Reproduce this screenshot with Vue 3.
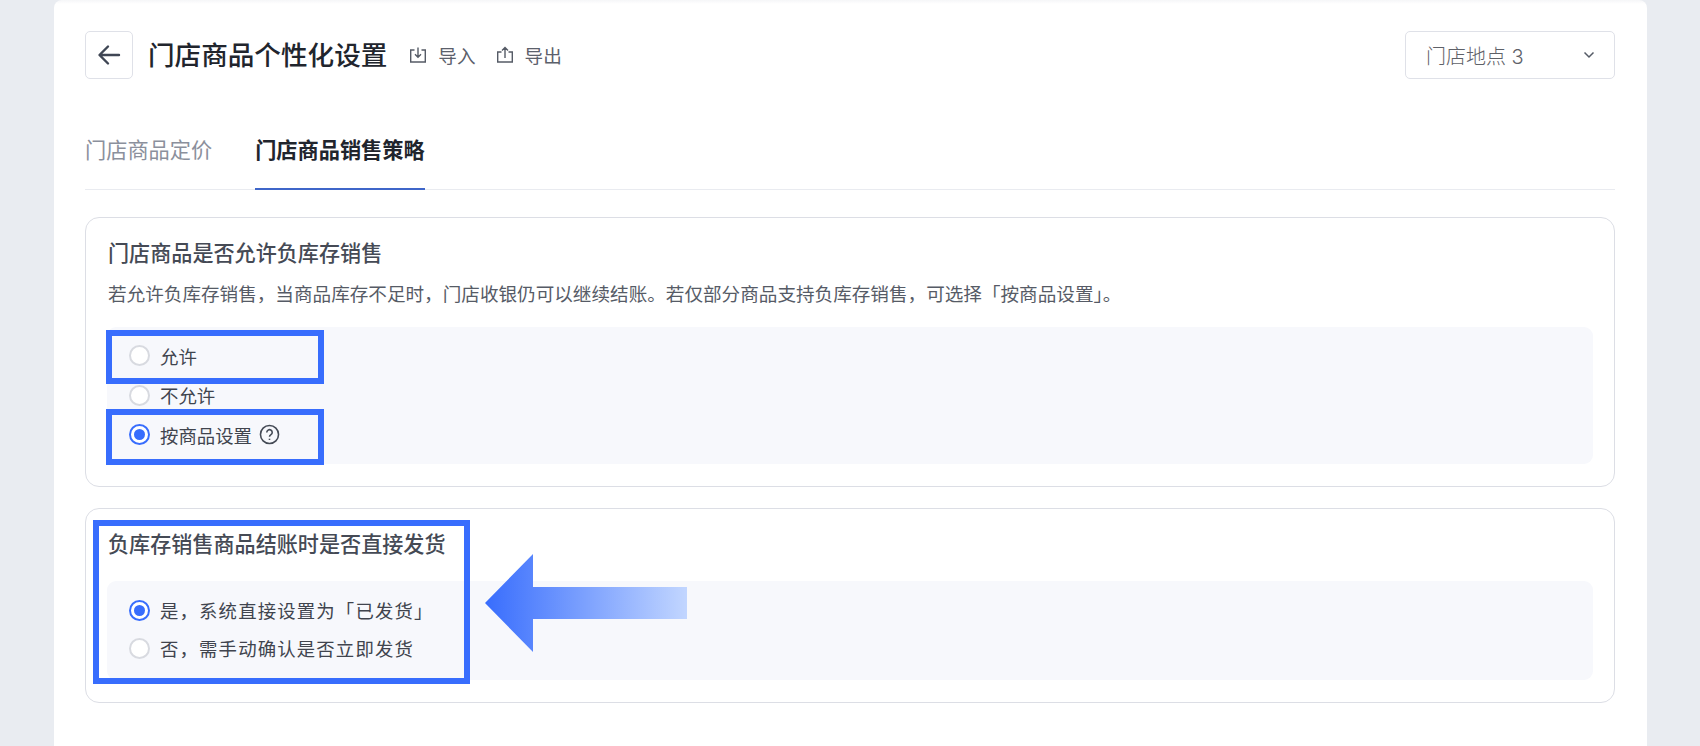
<script setup>
const firstOptions = [
  { label: '允许', checked: false },
  { label: '不允许', checked: false },
  { label: '按商品设置', checked: true, help: true },
]
const secondOptions = [
  { label: '是，系统直接设置为「已发货」', checked: true },
  { label: '否，需手动确认是否立即发货', checked: false },
]
</script>

<template>
  <div class="page">
    <main class="panel">
      <header class="head">
        <button class="back" aria-label="返回">
          <svg width="26" height="26" viewBox="0 0 26 26" fill="none" stroke="#3f4654" stroke-width="2.4" stroke-linecap="round" stroke-linejoin="round">
            <path d="M23 13H4M12 4.5 3.5 13l8.500 8.500" />
          </svg>
        </button>
        <h1 class="title">门店商品个性化设置</h1>
        <a class="action">
          <svg width="18" height="18" viewBox="0 0 18 18" fill="none" stroke="#555b66" stroke-width="1.400">
            <path d="M5.500 4H1.700v12h14.600V4h-3.800M9 1.500V11M6 8.200 9 11.200l3-3" />
          </svg>
          <span class="action-text">导入</span>
        </a>
        <a class="action">
          <svg width="18" height="18" viewBox="0 0 18 18" fill="none" stroke="#555b66" stroke-width="1.400">
            <path d="M5.500 6H1.700v10h14.600V6h-3.800M9 12V1.800M6 4.600l3-3 3 3" />
          </svg>
          <span class="action-text">导出</span>
        </a>
        <div class="select">
          <span>门店地点 3</span>
          <svg width="12" height="8" viewBox="0 0 12 8" fill="none" stroke="#555b66" stroke-width="1.500">
            <path d="M1.500 1.500 6 6l4.500-4.500" />
          </svg>
        </div>
      </header>

      <nav class="tabs">
        <span class="tab">门店商品定价</span>
        <span class="tab active">门店商品销售策略</span>
      </nav>

      <section class="card first">
        <h2 class="card-title">门店商品是否允许负库存销售</h2>
        <p class="desc">若允许负库存销售，当商品库存不足时，门店收银仍可以继续结账。若仅部分商品支持负库存销售，可选择「按商品设置」。</p>
        <div class="options opts-first">
          <label v-for="o in firstOptions" :key="o.label" class="option">
            <span class="radio" :class="{ on: o.checked }"></span>
            <span>{{ o.label }}</span>
            <svg v-if="o.help" class="help" width="21" height="21" viewBox="0 0 20 20" fill="none" stroke="#444a55" stroke-width="1.500">
              <circle cx="10" cy="10" r="8.600" />
              <path d="M7.400 8a2.600 2.600 0 1 1 4 2.200c-.9.600-1.400 1-1.400 2" />
              <path d="M10 14v1.200" />
            </svg>
          </label>
        </div>
        <span class="mark mark-a"></span>
        <span class="mark mark-b"></span>
      </section>

      <section class="card second">
        <h2 class="card-title">负库存销售商品结账时是否直接发货</h2>
        <div class="options opts-second">
          <label v-for="o in secondOptions" :key="o.label" class="option">
            <span class="radio" :class="{ on: o.checked }"></span>
            <span>{{ o.label }}</span>
          </label>
        </div>
        <span class="mark mark-c"></span>
        <svg class="arrow" width="204" height="98" viewBox="0 0 204 98">
          <defs>
            <linearGradient id="fade" x1="0" y1="0" x2="1" y2="0">
              <stop offset="0" stop-color="#386dfd" />
              <stop offset="1" stop-color="#c2d6ff" />
            </linearGradient>
          </defs>
          <path d="M0 49 48 0V33H202V65H48V98Z" fill="url(#fade)" />
        </svg>
      </section>
    </main>
  </div>
</template>

<style>
html, body { margin: 0; background: #e9ecf1; overflow: hidden; }
</style>

<style scoped>
.page {
  width: 1700px;
  height: 746px;
  overflow: hidden;
  padding: 0 53px 0 54px;
  box-sizing: border-box;
  background: #e9ecf1;
  font-family: Inter, "Noto Sans CJK SC", sans-serif;
  color: #333842;
}
.panel {
  height: 100%;
  box-sizing: border-box;
  background: linear-gradient(#f5f6f8, #fff 4px);
  border-radius: 8px 8px 0 0;
  padding: 31px 32px 0 31px;
}
.head {
  display: flex;
  align-items: center;
  height: 48px;
}
.back {
  width: 48px;
  height: 48px;
  padding: 0;
  display: flex;
  align-items: center;
  justify-content: center;
  border: 1px solid #dfe1e8;
  border-radius: 5px;
  background: #fff;
  box-sizing: border-box;
}
.title {
  margin: 0 22px 0 15px;
  font-size: 26.6px;
  font-weight: 500;
  color: #21252d;
  line-height: 1;
}
.action {
  display: flex;
  align-items: center;
  gap: 11px;
  margin-right: 20px;
  font-size: 18.6px;
  color: #5b606b;
}
.action-text { position: relative; top: -1px; }
.select {
  margin-left: auto;
  width: 210px;
  height: 48px;
  box-sizing: border-box;
  border: 1px solid #dfe1e8;
  border-radius: 5px;
  padding: 0 19px 0 20px;
  display: flex;
  align-items: center;
  justify-content: space-between;
  font-size: 20px;
  font-weight: 300;
  color: #5e6168;
}
.tabs {
  display: flex;
  gap: 43px;
  margin-top: 36px;
  height: 75px;
  box-sizing: border-box;
  border-bottom: 1px solid #e9ebf0;
}
.tab {
  height: 75px;
  box-sizing: border-box;
  line-height: 70px;
  font-size: 21.2px;
  color: #8b909c;
}
.tab.active {
  font-weight: 700;
  color: #21252d;
  border-bottom: 2px solid #3f66c9;
}
.card {
  position: relative;
  border: 1px solid #dcdee5;
  border-radius: 14px;
  padding: 22px 21px 0;
  box-sizing: border-box;
}
.card.first { height: 270px; margin-top: 27px; }
.card.second { height: 195px; margin-top: 21px; }
.card-title {
  margin: 0 0 0 1px;
  font-size: 21.1px;
  line-height: 28px;
  font-weight: 500;
  color: #454a55;
}
.desc {
  margin: 13px 0 0 1px;
  font-size: 18.6px;
  line-height: 26px;
  color: #565b66;
}
.options {
  background: #f7f8fc;
  border-radius: 9px;
  display: flex;
  flex-direction: column;
  padding-left: 22px;
}
.opts-first { height: 137px; margin-top: 20px; padding-top: 9px; box-sizing: border-box; }
.opts-second { height: 99px; margin-top: 22px; padding-top: 10px; box-sizing: border-box; }
.option {
  display: flex;
  align-items: center;
  height: 39.500px;
  font-size: 18.4px;
  color: #40444e;
}
.opts-second .option { height: 38px; letter-spacing: 1.150px; }
.radio {
  width: 21px;
  height: 21px;
  box-sizing: border-box;
  border: 2px solid #d8dae0;
  border-radius: 50%;
  background: #fff;
  margin-right: 10px;
  display: flex;
  align-items: center;
  justify-content: center;
  flex: none;
}
.radio.on { border: 2px solid #386dfd; }
.radio.on::after {
  content: "";
  width: 11px;
  height: 11px;
  border-radius: 50%;
  background: #386dfd;
}
.help { margin-left: 7px; }
.mark {
  position: absolute;
  box-sizing: border-box;
  border: 6px solid #386dfd;
}
.mark-a { left: 20px; top: 112px; width: 218px; height: 54px; }
.mark-b { left: 20px; top: 191px; width: 218px; height: 56px; }
.mark-c { left: 7px; top: 11px; width: 377px; height: 164px; }
.arrow { position: absolute; left: 399px; top: 45px; filter: blur(0.6px); }
</style>
